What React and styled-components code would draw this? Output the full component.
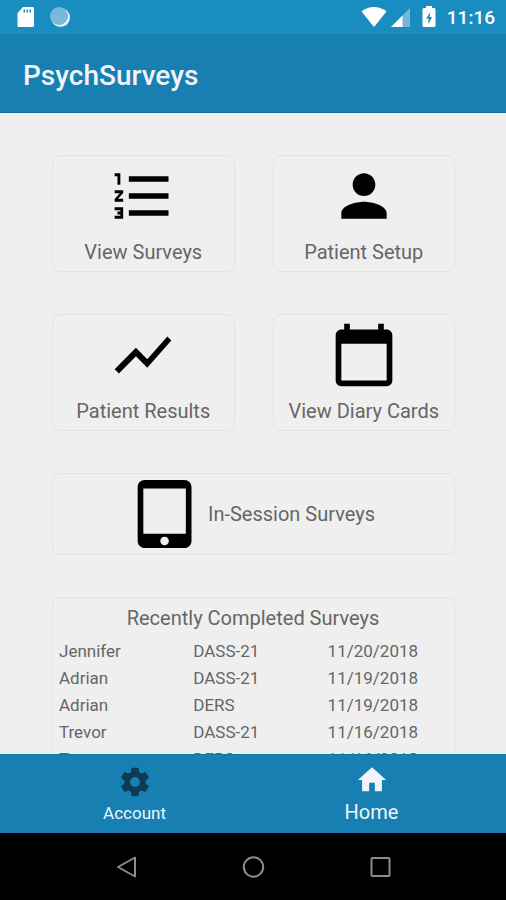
import styled, { createGlobalStyle } from 'styled-components'

const surveys = [
    { name: 'Jennifer', survey: 'DASS-21', date: '11/20/2018' },
    { name: 'Adrian', survey: 'DASS-21', date: '11/19/2018' },
    { name: 'Adrian', survey: 'DERS', date: '11/19/2018' },
    { name: 'Trevor', survey: 'DASS-21', date: '11/16/2018' },
    { name: 'Trevor', survey: 'DERS', date: '11/16/2018' },
]

const icons = {
    list: 'M2 17h2v.5H3v1h1v.5H2v1h3v-4H2v1zm1-9h1V4H2v1h1v3zm-1 3h1.8L2 13.1v.9h3v-1H3.2L5 10.9V10H2v1zm5-6v2h14V5H7zm0 14h14v-2H7v2zm0-6h14v-2H7v2z',
    person: 'M12 12c2.21 0 4-1.79 4-4s-1.79-4-4-4-4 1.79-4 4 1.79 4 4 4zm0 2c-2.67 0-8 1.34-8 4v2h16v-2c0-2.66-5.33-4-8-4z',
    chart: 'M3.5 18.49l6-6.01 4 4L22 6.92l-1.41-1.41-7.09 7.97-4-4L2 16.99z',
    calendar: 'M20 3h-1V1h-2v2H7V1H5v2H4c-1.1 0-2 .9-2 2v16c0 1.1.9 2 2 2h16c1.1 0 2-.9 2-2V5c0-1.1-.9-2-2-2zm0 18H4V8h16v13z',
    tablet: 'M18.5 0h-14C3.12 0 2 1.12 2 2.5v19C2 22.88 3.12 24 4.5 24h14c1.38 0 2.5-1.12 2.5-2.5v-19C21 1.12 19.88 0 18.5 0zm-7 23c-.83 0-1.5-.67-1.5-1.5s.67-1.5 1.5-1.5 1.5.67 1.5 1.5-.67 1.5-1.5 1.5zm7.5-4H4V3h15v16z',
    settings: 'M19.43 12.98c.04-.32.07-.64.07-.98s-.03-.66-.07-.98l2.11-1.65c.19-.15.24-.42.12-.64l-2-3.46c-.12-.22-.39-.3-.61-.22l-2.49 1c-.52-.4-1.08-.73-1.69-.98l-.38-2.65C14.46 2.18 14.25 2 14 2h-4c-.25 0-.46.18-.49.42l-.38 2.65c-.61.25-1.17.59-1.69.98l-2.49-1c-.23-.09-.49 0-.61.22l-2 3.46c-.13.22-.07.49.12.64l2.11 1.65c-.04.32-.07.65-.07.98s.03.66.07.98l-2.11 1.65c-.19.15-.24.42-.12.64l2 3.46c.12.22.39.3.61.22l2.49-1c.52.4 1.08.73 1.69.98l.38 2.65c.03.24.24.42.49.42h4c.25 0 .46-.18.49-.42l.38-2.65c.61-.25 1.17-.59 1.69-.98l2.49 1c.23.09.49 0 .61-.22l2-3.46c.12-.22.07-.49-.12-.64l-2.11-1.65zM12 15.5c-1.93 0-3.5-1.57-3.5-3.5s1.57-3.5 3.5-3.5 3.5 1.57 3.5 3.5-1.57 3.5-3.5 3.5z',
    home: 'M10 20v-6h4v6h5v-8h3L12 3 2 12h3v8z',
}

const Icon = ({ name, size }) => (
    <svg width={size} height={size} viewBox="0 0 24 24" fill="currentColor" aria-hidden="true">
        <path d={icons[name]} />
    </svg>
)

const StatusIcons = () => (
    <StatusGroup $gap={14}>
        <svg width="18" height="22" viewBox="0 0 18 22" aria-hidden="true">
            <path fill="#fff" fillRule="evenodd" d="M6 1h9.500a1.500 1.500 0 0 1 1.500 1.500v17a1.500 1.500 0 0 1-1.500 1.500h-13.500a1.500 1.500 0 0 1-1.500-1.500V7zM6.500 3.500v3h1.500v-3zm3 0v3h1.500v-3zm3 0v3h1.500v-3z" />
        </svg>
        <svg width="22" height="22" viewBox="0 0 22 22" aria-hidden="true">
            <circle cx="11.500" cy="11.500" r="9.500" fill="#e2f2f9" />
            <circle cx="10" cy="10" r="9" fill="#78b9d9" />
        </svg>
    </StatusGroup>
)

const SignalIcons = () => (
    <StatusGroup $gap={3}>
        <svg width="26" height="22" viewBox="0 0 26 22" aria-hidden="true">
            <path fill="#fff" d="M.5 5.500C7-.5 19-.5 25.500 5.500L13 21z" />
        </svg>
        <svg width="21" height="22" viewBox="0 0 21 22" aria-hidden="true">
            <path fill="#74b7d9" d="M20 2v19H1z" />
            <path fill="#fff" d="M12.500 9.500V21H1z" />
        </svg>
        <BatteryIcon width="14" height="22" viewBox="0 0 14 22" aria-hidden="true">
            <path fill="#fff" d="M4 0h6v2h2a1.500 1.500 0 0 1 1.500 1.500v16a1.500 1.500 0 0 1-1.500 1.500H2a1.500 1.500 0 0 1-1.500-1.500v-16A1.500 1.500 0 0 1 2 2h2z" />
            <path fill="#178abf" d="M8.500 6l-4.500 6.500h2.500V18L10 11H7.500z" />
        </BatteryIcon>
        <Clock>11:16</Clock>
    </StatusGroup>
)

const SurveyTable = () => (
    <RecentCard>
        <Table>
            <Caption>Recently Completed Surveys</Caption>
            <tbody>
                {surveys.map((row, i) => (
                    <tr key={i}>
                        <Cell>{row.name}</Cell>
                        <Cell>{row.survey}</Cell>
                        <Cell>{row.date}</Cell>
                    </tr>
                ))}
            </tbody>
        </Table>
    </RecentCard>
)

const App = () => (
    <Screen>
        <GlobalStyle />
        <StatusBar>
            <StatusIcons />
            <SignalIcons />
        </StatusBar>
        <Header>
            <Title>PsychSurveys</Title>
        </Header>
        <Content>
            <CardGrid>
                <Card><Icon name="list" size={68} />View Surveys</Card>
                <Card><Icon name="person" size={68} />Patient Setup</Card>
                <Card><Icon name="chart" size={68} />Patient Results</Card>
                <Card><Icon name="calendar" size={68} />View Diary Cards</Card>
                <WideCard><Icon name="tablet" size={68} />In-Session Surveys</WideCard>
            </CardGrid>
            <SurveyTable />
        </Content>
        <TabBar>
            <Tab><Icon name="settings" size={34} />Account</Tab>
            <Tab $active><Icon name="home" size={34} />Home</Tab>
        </TabBar>
        <SystemBar>
            <SystemButton aria-label="Back">
                <svg width="24" height="24" viewBox="0 0 24 24"><path d="M21 2.500v19L4 12z" /></svg>
            </SystemButton>
            <SystemButton aria-label="Home screen">
                <svg width="24" height="24" viewBox="0 0 24 24"><circle cx="12.500" cy="12" r="9.700" /></svg>
            </SystemButton>
            <SystemButton aria-label="Recent apps">
                <svg width="24" height="24" viewBox="0 0 24 24"><rect x="3.500" y="3" width="18" height="18" rx="1" /></svg>
            </SystemButton>
        </SystemBar>
    </Screen>
)

const GlobalStyle = createGlobalStyle`
    * {
        box-sizing: border-box;
    }
    body {
        margin: 0;
        background: #efefef;
        font-family: Roboto, sans-serif;
    }
    button {
        border: none;
        background: none;
        padding: 0;
        font-family: inherit;
        cursor: pointer;
    }
    svg {
        display: block;
        flex-shrink: 0;
    }
`
const Screen = styled.div`
    display: flex;
    flex-direction: column;
    height: 100vh;
`
const StatusBar = styled.div`
    display: flex;
    justify-content: space-between;
    align-items: center;
    height: 34px;
    flex-shrink: 0;
    padding: 0 11px 0 17px;
    background: #198cc0;
`
const StatusGroup = styled.div`
    display: flex;
    align-items: center;
    gap: ${props => props.$gap}px;
`
const BatteryIcon = styled.svg`
    margin: 0 8px;
`
const Clock = styled.span`
    color: #fff;
    font-size: 19px;
    font-weight: 500;
    line-height: 20px;
    padding-top: 2px;
`
const Header = styled.header`
    display: flex;
    align-items: center;
    height: 79px;
    flex-shrink: 0;
    padding: 4px 23px 0;
    background: #177fb2;
    border-bottom: 1px solid #0f6c9b;
`
const Title = styled.h1`
    margin: 0;
    color: #f0f4f8;
    font-size: 28px;
    font-weight: 500;
`
const Content = styled.main`
    flex: 1;
    min-height: 0;
    overflow: hidden;
    padding: 42px 51px 0 52px;
`
const CardGrid = styled.div`
    display: grid;
    grid-template-columns: 1fr 1fr;
    gap: 42px 38px;
    margin-bottom: 42px;
`
const Card = styled.button`
    display: flex;
    flex-direction: column;
    align-items: center;
    height: 117px;
    padding-top: 6px;
    gap: 10px;
    border: 1px solid #e3e3e3;
    border-radius: 8px;
    color: #666;
    font-size: 20px;
    line-height: 24px;

    svg {
        color: #000;
    }
`
const WideCard = styled(Card)`
    grid-column: 1 / -1;
    flex-direction: row;
    justify-content: center;
    height: 82px;
    padding: 0;
    gap: 8px;
`
const RecentCard = styled.section`
    padding: 8px 0 8px 6px;
    border: 1px solid #e3e3e3;
    border-radius: 8px;
    color: #666;
`
const Table = styled.table`
    width: 100%;
    table-layout: fixed;
    border-collapse: collapse;
`
const Caption = styled.caption`
    padding-bottom: 8px;
    padding-right: 7px;
    font-size: 20px;
    line-height: 24px;
`
const Cell = styled.td`
    width: 34%;
    padding: 0;
    font-size: 17px;
    line-height: 27px;

    &:last-child {
        width: 32%;
    }
`
const TabBar = styled.nav`
    display: flex;
    height: 79px;
    flex-shrink: 0;
    padding: 0 16px;
    background: #177fb2;
    border-top: 1px solid #0f78ab;
`
const Tab = styled.button`
    flex: 1;
    display: flex;
    flex-direction: column;
    align-items: center;
    padding-top: ${props => props.$active ? 8 : 10}px;
    gap: ${props => props.$active ? 3 : 2}px;
    color: #f0f4f8;
    font-size: ${props => props.$active ? 20 : 17}px;
    line-height: 24px;

    svg {
        color: ${props => props.$active ? '#f0f4f8' : '#0b3c54'};
    }
`
const SystemBar = styled.div`
    display: flex;
    height: 67px;
    flex-shrink: 0;
    padding: 0 63px;
    background: #000;
`
const SystemButton = styled.button`
    flex: 1;
    display: flex;
    justify-content: center;
    align-items: center;

    svg {
        fill: none;
        stroke: #8c8c8c;
        stroke-width: 2;
        stroke-linejoin: round;
    }
`
export default App;
